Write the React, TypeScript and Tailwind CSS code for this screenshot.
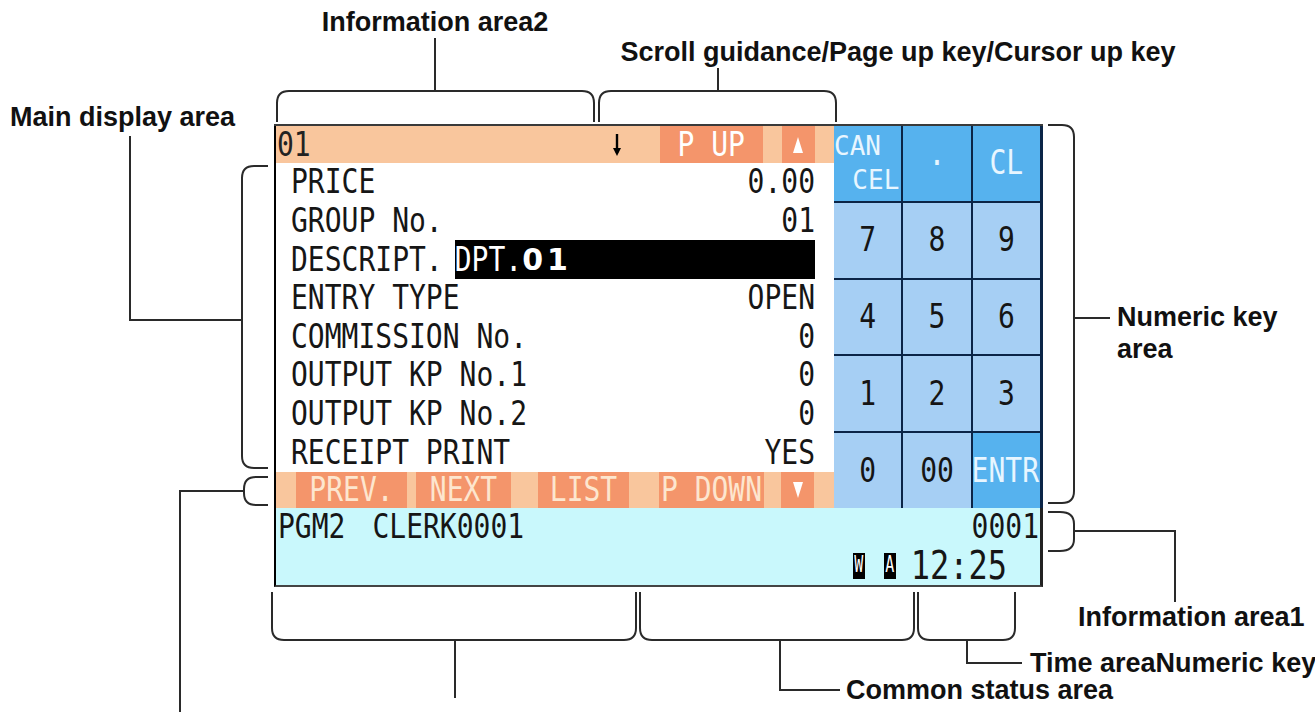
import React from "react";

const T = ({ children, className = "" }: { children: React.ReactNode; className?: string }) => (
  <span className={"inline-block scale-y-[1.2] leading-none whitespace-pre " + className}>{children}</span>
);

const rows: [string, string][] = [
  ["PRICE", "0.00"],
  ["GROUP No.", "01"],
  ["DESCRIPT.", ""],
  ["ENTRY TYPE", "OPEN"],
  ["COMMISSION No.", "0"],
  ["OUTPUT KP No.1", "0"],
  ["OUTPUT KP No.2", "0"],
  ["RECEIPT PRINT", "YES"],
];

function Key({ label, hi }: { label: React.ReactNode; hi?: boolean }) {
  return (
    <div
      className={
        "flex items-center justify-center overflow-hidden text-[28px] " +
        (hi ? "bg-[#56b2ee] text-[#e8f6ff]" : "bg-[#a6cff4] text-[#151515]")
      }
    >
      {label}
    </div>
  );
}

const Label = ({ children, className }: { children: React.ReactNode; className: string }) => (
  <div className={"absolute whitespace-nowrap font-['Liberation_Sans',Arial,sans-serif] font-bold text-[27px] leading-none text-[#111] " + className}>
    {children}
  </div>
);

export default function App() {
  return (
    <div className="relative w-[1315px] h-[712px] overflow-hidden bg-white">
      {/* Screen */}
      <div className="ml-[274px] pt-[124px] w-[769px] font-['DejaVu_Sans_Mono',monospace] text-[#161616]">
        <div className="flex h-[384px] border-t-2 border-[#3a3a3a]">
          {/* main column */}
          <div className="flex w-[560px] flex-col border-l-2 border-black bg-white text-[28px]">
            <div className="flex h-[37px] items-center bg-[#f9c69d]">
              <T className="ml-[1px] text-[#222]">01</T>
              <svg className="ml-[301px]" width="10" height="24" viewBox="0 0 10 24">
                <path d="M5 1 V20" stroke="black" strokeWidth="2.4" />
                <path d="M1 15 L5 23 L9 15 Z" fill="black" />
              </svg>
              <div className="ml-[38px] flex h-full w-[103px] items-center justify-center bg-[#f4956b] text-white">
                <T>P UP</T>
              </div>
              <div className="ml-[19px] flex h-full w-[33px] items-center justify-center bg-[#f4956b]">
                <svg width="12" height="18" viewBox="0 0 12 18">
                  <path d="M6 1 L11 17 H1 Z" fill="white" />
                </svg>
              </div>
            </div>
            <div className="grid flex-1 grid-rows-8">
              {rows.map(([a, b], i) => (
                <div key={i} className="flex items-center justify-between pl-[15px] pr-[19px]">
                  <T>{a}</T>
                  {i === 2 ? (
                    <div className="ml-[12px] flex h-full flex-1 items-center bg-black text-white">
                      <T>DPT.</T>
                      <span className="font-['DejaVu_Sans',sans-serif] font-bold text-[30px] leading-none tracking-[4px]">01</span>
                    </div>
                  ) : (
                    <T>{b}</T>
                  )}
                </div>
              ))}
            </div>
            <div className="flex h-[36px] items-stretch bg-[#f9c69d] pl-[20px] text-[#fde6cf]">
              <div className="flex w-[111px] items-center justify-center bg-[#f4956b]"><T>PREV.</T></div>
              <div className="ml-[9px] flex w-[95px] items-center justify-center bg-[#f4956b]"><T>NEXT</T></div>
              <div className="ml-[27px] flex w-[91px] items-center justify-center bg-[#f4956b]"><T>LIST</T></div>
              <div className="ml-[30px] flex w-[105px] items-center justify-center bg-[#f4956b]"><T>P DOWN</T></div>
              <div className="ml-[17px] flex w-[33px] items-center justify-center bg-[#f4956b]">
                <svg width="12" height="18" viewBox="0 0 12 18">
                  <path d="M1 1 H11 L6 17 Z" fill="white" />
                </svg>
              </div>
            </div>
          </div>
          {/* keypad */}
          <div className="grid w-[209px] grid-cols-3 grid-rows-5 gap-[2px] border-r-[3px] border-[#0b2547] bg-[#0b2547]">
            <Key
              hi
              label={
                <div className="flex w-full flex-col text-[26px] leading-none">
                  <span className="self-start">CAN</span>
                  <span className="mt-[8px] self-end pr-[2px]">CEL</span>
                </div>
              }
            />
            <Key hi label={<T>·</T>} />
            <Key hi label={<T>CL</T>} />
            {["7", "8", "9", "4", "5", "6", "1", "2", "3", "0", "00"].map((k) => (
              <Key key={k} label={<T>{k}</T>} />
            ))}
            <Key hi label={<T className="-ml-[2px]">ENTR</T>} />
          </div>
        </div>
        {/* common status */}
        <div className="flex h-[79px] flex-col border-b-2 border-l-2 border-r-[3px] border-b-[#444] border-l-black border-r-[#222] bg-[#c9f8fc] text-[28px]">
          <div className="flex h-[38px] items-center">
            <T className="ml-[2px]">PGM2</T>
            <T className="ml-[27px]">CLERK0001</T>
            <T className="ml-auto mr-[1px]">0001</T>
          </div>
          <div className="flex flex-1 items-center justify-end pr-[33px]">
            <span className="flex h-[26px] w-[12px] items-center justify-center bg-black text-[15px] text-white">
              <T className="scale-y-[1.5]">W</T>
            </span>
            <span className="ml-[19px] flex h-[26px] w-[12px] items-center justify-center bg-black text-[15px] text-white">
              <T className="scale-y-[1.5]">A</T>
            </span>
            <T className="ml-[15px] text-[32px]">12:25</T>
          </div>
        </div>
      </div>

      {/* annotation lines */}
      <svg className="pointer-events-none absolute left-0 top-0" width="1315" height="712" viewBox="0 0 1315 712" fill="none" stroke="#2a2a2a" strokeWidth="2">
        <path d="M277,122 V103 Q277,91 289,91 H582 Q594,91 594,103 V122" />
        <path d="M435,91 V38" />
        <path d="M599,122 V103 Q599,91 611,91 H824 Q836,91 836,103 V122" />
        <path d="M718,91 V68" />
        <path d="M268,166 H254 Q242,166 242,178 V456 Q242,468 254,468 H268" />
        <path d="M242,320 H130 V136" />
        <path d="M268,477 H256 Q244,477 244,489 V493 Q244,505 256,505 H268" />
        <path d="M244,491 H180 V712" />
        <path d="M1048,125 H1062 Q1074,125 1074,137 V491 Q1074,503 1062,503 H1048" />
        <path d="M1074,318 H1110" />
        <path d="M1048,512 H1060 Q1074,512 1074,524 V539 Q1074,551 1060,551 H1048" />
        <path d="M1074,531 H1175 V602" />
        <path d="M272,592 V628 Q272,640 284,640 H624 Q636,640 636,628 V592" />
        <path d="M455,640 V698" />
        <path d="M640,592 V628 Q640,640 652,640 H902 Q914,640 914,628 V592" />
        <path d="M780,640 V690 H840" />
        <path d="M918,592 V628 Q918,640 930,640 H1003 Q1015,640 1015,628 V592" />
        <path d="M967,640 V663 H1022" />
      </svg>

      <Label className="left-[435px] top-[9px] -translate-x-1/2">Information area2</Label>
      <Label className="left-[898px] top-[39px] -translate-x-1/2">Scroll guidance/Page up key/Cursor up key</Label>
      <Label className="left-[10px] top-[104px]">Main display area</Label>
      <Label className="left-[1117px] top-[304px]">Numeric key</Label>
      <Label className="left-[1117px] top-[336px]">area</Label>
      <Label className="left-[1078px] top-[604px]">Information area1</Label>
      <Label className="left-[1030px] top-[650px]">Time areaNumeric key</Label>
      <Label className="left-[846px] top-[677px]">Common status area</Label>
    </div>
  );
}
